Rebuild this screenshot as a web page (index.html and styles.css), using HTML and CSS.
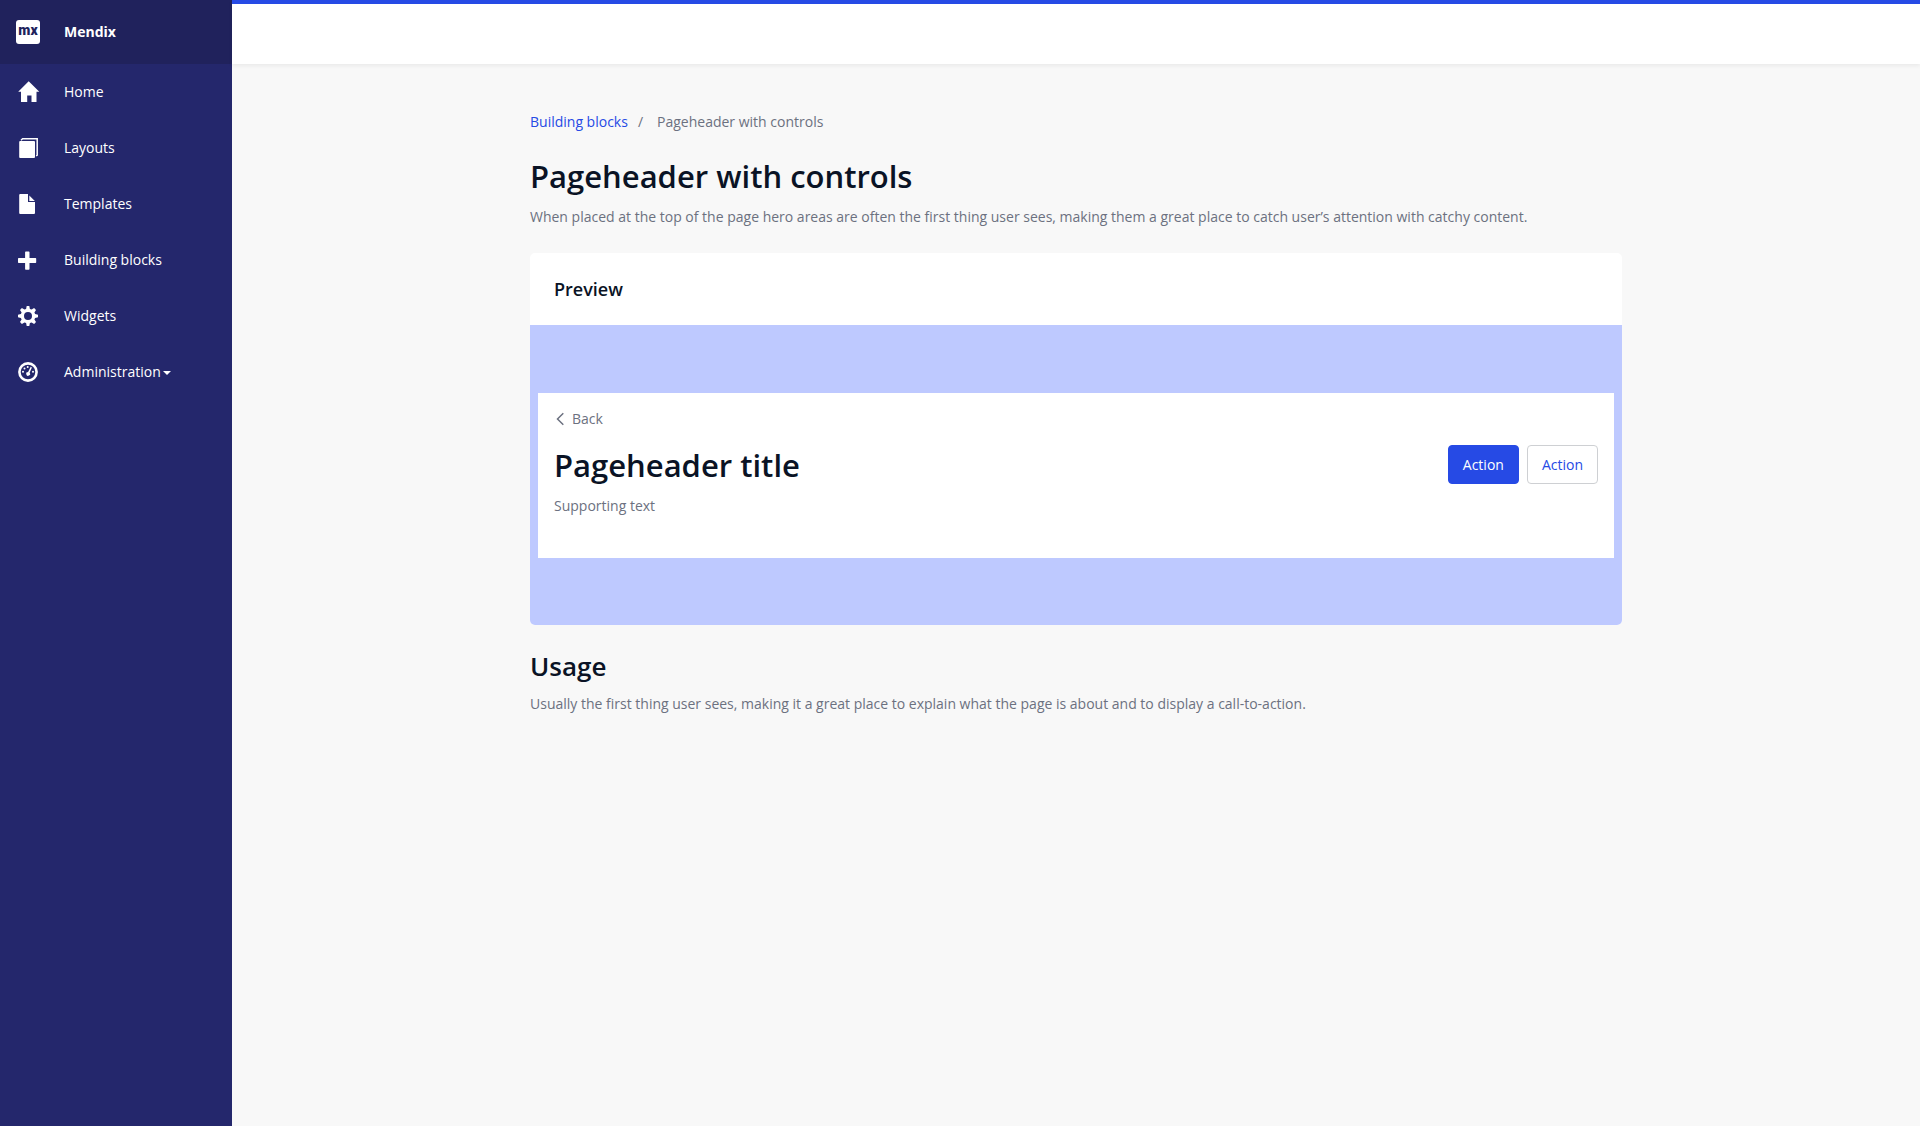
FILE: index.html
```html
<!DOCTYPE html>
<html lang="en">
<head>
<meta charset="utf-8">
<meta name="viewport" content="width=device-width, initial-scale=1">
<title>Pageheader with controls</title>
<link rel="stylesheet" href="styles.css">
</head>
<body>
<div class="app">
  <aside class="sidebar">
    <a class="brand" href="#"><span class="brand-logo" aria-hidden="true">mx</span><span>Mendix</span></a>
    <nav class="menu" aria-label="Main">
      <a class="menu-item" href="#">
        <svg class="menu-icon" viewBox="0 0 20 20" aria-hidden="true"><path d="M10.7-.8 21.300 9.700h-2.800V20h-5v-6.500H9.200V20H3V9.700H.2z"/></svg>
        <span>Home</span>
      </a>
      <a class="menu-item" href="#">
        <svg class="menu-icon" viewBox="0 0 20 20" aria-hidden="true"><path d="M2.200 3H16q1 0 1 1v15q0 1-1 1H2.200q-1 0-1-1V4q0-1 1-1z"/><path class="line" d="M3 2.200 4.600.8h14.600v16.400l-1 .8"/></svg>
        <span>Layouts</span>
      </a>
      <a class="menu-item" href="#">
        <svg class="menu-icon" viewBox="0 0 20 20" aria-hidden="true"><path d="M2.200 0h7.800v8h7v11q0 1-1 1H2.200q-1 0-1-1V1q0-1 1-1z"/><path d="M11.300 1.500 16.800 6.900h-5.500z"/></svg>
        <span>Templates</span>
      </a>
      <a class="menu-item" href="#">
        <svg class="menu-icon" viewBox="0 0 20 20" aria-hidden="true"><path d="M7.800 1.500h3q.7 0 .7.700V8h6q.7 0 .7.700v3.600q0 .7-.7.700h-6v6q0 .7-.7.700h-3q-.7 0-.7-.7v-6H.7Q0 13 0 12.300V8.700Q0 8 .7 8h6.400V2.200q0-.7.700-.7z"/></svg>
        <span>Building blocks</span>
      </a>
      <a class="menu-item" href="#">
        <svg class="menu-icon" viewBox="0 0 20 20" aria-hidden="true"><path fill-rule="evenodd" d="M8.700 0h2.600l.6 2.900 1.700.7 2.500-1.600 1.900 1.900-1.600 2.500.7 1.700 2.900.6v2.600l-2.900.6-.7 1.700 1.600 2.500-1.900 1.900-2.500-1.600-1.700.7-.6 2.900H8.700l-.6-2.900-1.700-.7L3.900 18 2 16.100l1.600-2.500-.7-1.700L0 11.300V8.700l2.900-.6.7-1.700L2 3.900 3.900 2l2.500 1.600 1.700-.7zM10 6a4 4 0 1 0 0 8 4 4 0 0 0 0-8z"/></svg>
        <span>Widgets</span>
      </a>
      <a class="menu-item" href="#">
        <svg class="menu-icon" viewBox="0 0 20 20" aria-hidden="true"><circle class="ring" cx="10" cy="10" r="8.600"/><circle cx="5" cy="9.800" r="1"/><circle cx="6.500" cy="6.500" r="1"/><circle cx="9.700" cy="5" r="1"/><circle cx="15" cy="9.800" r="1"/><path d="m12.700 4.800 1.200.6-2.300 5.300a1.900 1.900 0 1 1-1.500-.7z"/></svg>
        <span>Administration<span class="caret"></span></span>
      </a>
    </nav>
  </aside>
  <div class="page">
    <header class="topbar"></header>
    <main class="content">
      <nav class="breadcrumb" aria-label="Breadcrumb">
        <a class="link" href="#">Building blocks</a><span class="separator">/</span><span>Pageheader with controls</span>
      </nav>
      <h1 class="title">Pageheader with controls</h1>
      <p class="text">When placed at the top of the page hero areas are often the first thing user sees, making them a great place to catch user’s attention with catchy content.</p>
      <section class="card">
        <h2 class="card-title">Preview</h2>
        <div class="preview">
          <div class="pageheader">
            <a class="back" href="#"><svg class="back-icon" viewBox="0 0 14 14" aria-hidden="true"><path d="M9.300 1.200 3.500 7l5.800 5.800"/></svg>Back</a>
            <div class="pageheader-row">
              <div>
                <h2 class="title">Pageheader title</h2>
                <p class="text">Supporting text</p>
              </div>
              <div class="actions">
                <button class="btn btn-primary" type="button">Action</button>
                <button class="btn" type="button">Action</button>
              </div>
            </div>
          </div>
        </div>
      </section>
      <h2 class="subtitle">Usage</h2>
      <p class="text">Usually the first thing user sees, making it a great place to explain what the page is about and to display a call-to-action.</p>
    </main>
  </div>
</div>
</body>
</html>
```
FILE: styles.css
```css
* { box-sizing: border-box; }
body {
  margin: 0;
  font: 14px/20px "Open Sans", sans-serif;
  color: #6c7180;
  background: #f8f8f8;
}
h1, h2, p { margin: 0; }
a { color: inherit; text-decoration: none; }

.app { display: flex; min-height: 100vh; }
.sidebar { flex: none; width: 232px; background: #24276c; color: #fff; }
.brand {
  display: flex;
  align-items: center;
  gap: 24px;
  height: 64px;
  padding: 0 16px;
  background: #20225c;
  font-weight: 700;
}
.brand-logo {
  width: 24px;
  height: 24px;
  border-radius: 3px;
  background: #fff;
  color: #20225c;
  font: 900 14px/21px Roboto, sans-serif;
  text-align: center;
}
.menu-item {
  display: flex;
  align-items: center;
  gap: 26px;
  height: 56px;
  padding: 0 18px;
}
.menu-icon { width: 20px; height: 20px; fill: #fff; overflow: visible; }
.menu-icon .line { fill: none; stroke: #fff; stroke-width: 1.500; }
.menu-icon .ring { fill: none; stroke: #fff; stroke-width: 2.600; }
.caret {
  display: inline-block;
  margin-left: 2px;
  border: 4px solid transparent;
  border-top-color: #fff;
  border-bottom: 0;
  vertical-align: middle;
}

.page { flex: 1; min-width: 0; }
.topbar {
  height: 64px;
  border-top: 4px solid #264ae5;
  background: #fff;
  box-shadow: 0 2px 4px rgba(0, 0, 0, .06);
}
.content { max-width: 1140px; margin: 0 auto; padding: 48px 24px; }
.breadcrumb { display: flex; margin-bottom: 24px; }
.link { color: #264ae5; }
.separator { margin: 0 14px 0 10px; }
.title { font-size: 31px; line-height: 40px; font-weight: 600; color: #0a1325; margin-bottom: 11px; }
.card { margin: 26px 0 21px; border-radius: 5px; background: #fff; overflow: hidden; }
.card-title { padding: 24px; font-size: 18px; line-height: 24px; font-weight: 600; color: #0a1325; }
.preview {
  display: flex;
  align-items: center;
  min-height: 300px;
  padding: 8px;
  background: #bec9ff;
}
.pageheader { flex: 1; padding: 16px 16px 42px; background: #fff; }
.back { display: inline-flex; align-items: center; gap: 4px; margin-bottom: 16px; }
.back-icon { width: 14px; height: 14px; fill: none; stroke: #6c7180; stroke-width: 1.500; }
.pageheader-row { display: flex; justify-content: space-between; align-items: flex-start; }
.actions { display: flex; gap: 8px; }
.btn {
  padding: 8px 14px;
  border: 1px solid #ced0d3;
  border-radius: 4px;
  background: #fff;
  color: #264ae5;
  font: 400 14px/21px "Open Sans", sans-serif;
}
.btn-primary { border-color: #264ae5; background: #264ae5; color: #fff; }
.subtitle { margin-bottom: 8px; font-size: 26px; line-height: 40px; font-weight: 600; color: #0a1325; }
```
